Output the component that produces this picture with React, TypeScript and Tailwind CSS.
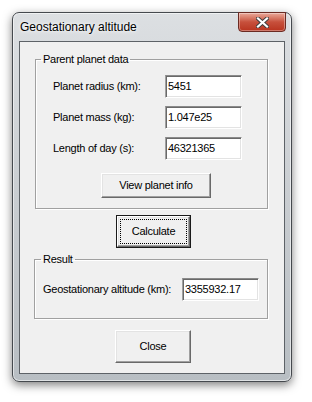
const ui = "font-['Liberation_Sans',Arial,sans-serif] text-[11px] tracking-[-0.25px] text-black";

const TextBox = ({ value }: { value: string }) => (
  <div className="h-[23px] w-[77px] border border-t-[#8a8a8a] border-l-[#a0a0a0] border-b-white border-r-white bg-white px-[2px] pt-[3px] leading-[14px] shadow-[inset_1px_1px_0_#696969,inset_-1px_-1px_0_#e3e3e3]">
    {value}
  </div>
);

const Button = ({
  label,
  className,
  isDefault,
}: {
  label: string;
  className: string;
  isDefault?: boolean;
}) => {
  if (isDefault) {
    return (
      <div className={`border border-[#1a1a1a] ${className}`}>
        <div className="flex h-full w-full items-center justify-center border border-t-white border-l-white border-r-[#696969] border-b-[#696969] bg-[#f0f0f0] p-[2px] shadow-[inset_-1px_-1px_0_#a0a0a0,inset_1px_1px_0_#e3e3e3]">
          <div className="flex h-full w-full items-center justify-center border border-dotted border-black">
            {label}
          </div>
        </div>
      </div>
    );
  }
  return (
    <div
      className={`flex items-center justify-center border border-t-white border-l-white border-r-[#696969] border-b-[#696969] bg-[#f0f0f0] shadow-[inset_-1px_-1px_0_#a0a0a0,inset_1px_1px_0_#e3e3e3] ${className}`}
    >
      {label}
    </div>
  );
};

const groupBox =
  "border border-[#a0a0a0] shadow-[inset_1px_1px_0_#fff,1px_1px_0_#fff]";

export default function App() {
  return (
    <div className="min-h-[402px] w-[312px] bg-white pl-[12px] pt-[12px]">
      {/* window frame */}
      <div className="flex h-[370px] w-[280px] flex-col rounded-[7px] border border-[#45494e] bg-gradient-to-b from-[#dcdfe2] via-[#c9cdd1] to-[#b8bec3] px-[6px] pb-[7px] shadow-[0_3px_10px_rgba(0,0,0,0.5),inset_0_0_0_1px_rgba(255,255,255,0.55)]">
        {/* title bar */}
        <div className="-mx-[6px] flex h-[28px] items-start justify-between pl-[7px] pr-[5px]">
          <span className="mt-[7px] font-['Liberation_Sans',Arial,sans-serif] text-[12px] leading-[15px] text-black [text-shadow:0_0_6px_#fff,0_0_3px_#fff]">
            Geostationary altitude
          </span>
          <div className="-mt-px flex h-[20px] w-[48px] items-center justify-center rounded-b-[4px] border border-[#6b2a22] bg-gradient-to-b from-[#e9a99a] via-[#c7503c] to-[#b8331e] shadow-[inset_0_0_0_1px_rgba(255,255,255,0.35)]">
            <svg width="13" height="11" viewBox="0 0 13 11">
              <path
                d="M2 1.5 L11 9.5 M11 1.5 L2 9.5"
                stroke="#3d3d3d"
                strokeWidth="4"
                strokeLinecap="square"
              />
              <path
                d="M2 1.5 L11 9.5 M11 1.5 L2 9.5"
                stroke="#ffffff"
                strokeWidth="2.2"
                strokeLinecap="square"
              />
            </svg>
          </div>
        </div>

        {/* client area */}
        <div className={`flex-1 border border-[#5d6267] bg-[#f0f0f0] ${ui}`}>
          <fieldset className={`ml-[15px] mt-[10px] w-[233px] ${groupBox}`}>
            <legend className="ml-[5px] px-[2px] leading-[14px]">Parent planet data</legend>
            <div className="pb-[10px] pl-[17px] pt-[9px]">
              <div className="grid grid-cols-[112px_77px] items-center gap-y-[8px]">
                <span>Planet radius (km):</span>
                <TextBox value="5451" />
                <span>Planet mass (kg):</span>
                <TextBox value="1.047e25" />
                <span>Length of day (s):</span>
                <TextBox value="46321365" />
              </div>
              <Button label="View planet info" className="ml-[48px] mt-[13px] h-[25px] w-[110px]" />
            </div>
          </fieldset>

          <Button label="Calculate" className="ml-[96px] mt-[6px] h-[33px] w-[75px]" isDefault />

          <fieldset className={`ml-[14px] mt-[4px] w-[234px] ${groupBox}`}>
            <legend className="ml-[6px] px-[2px] leading-[14px]">Result</legend>
            <div className="grid grid-cols-[139px_77px] items-center pb-[17px] pl-[8px] pt-[12px]">
              <span>Geostationary altitude (km):</span>
              <TextBox value="3355932.17" />
            </div>
          </fieldset>

          <Button label="Close" className="ml-[95px] mt-[11px] h-[33px] w-[76px]" />
        </div>
      </div>
    </div>
  );
}
